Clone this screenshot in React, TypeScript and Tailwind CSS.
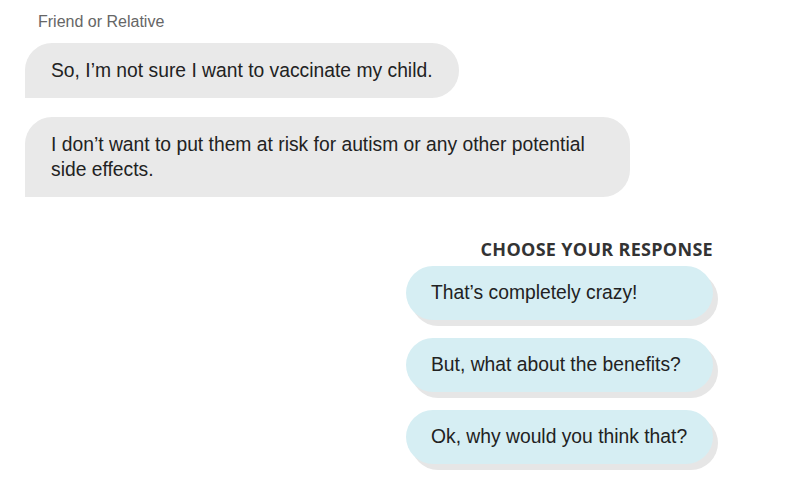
import React from 'react';

const responses = [
  "That’s completely crazy!",
  'But, what about the benefits?',
  'Ok, why would you think that?',
];

export default function App() {
  return (
    <div className="w-[810px] h-[489px] bg-white font-['Liberation_Sans',Arial,sans-serif] pt-[13px] overflow-hidden">
      {/* Incoming messages */}
      <div className="pl-[38px] text-[16px] leading-[18px] text-[#666]">Friend or Relative</div>
      <div className="flex flex-col items-start gap-[19px] pl-[25px] mt-[12px]">
        <div className="bg-[#e9e9e9] text-[#222] text-[19.3px] leading-[25px] px-[26px] py-[15px] rounded-[27px] rounded-bl-none">
          So, I’m not sure I want to vaccinate my child.
        </div>
        <div className="w-[605px] bg-[#e9e9e9] text-[#222] text-[19.3px] leading-[25px] px-[26px] py-[15px] rounded-[27px] rounded-bl-none">
          I don’t want to put them at risk for autism or any other potential side effects.
        </div>
      </div>

      {/* Response choices */}
      <div className="flex flex-col items-end pr-[97px] mt-[40px]">
        <h3 className="font-['Open_Sans',sans-serif] font-bold text-[18px] leading-[24px] tracking-[0.3px] text-[#333]">
          CHOOSE YOUR RESPONSE
        </h3>
        <div className="flex flex-col gap-[18px] mt-[5px]">
          {responses.map((r) => (
            <button
              key={r}
              className="w-[307px] h-[54px] flex items-center px-[25px] rounded-full bg-[#d6eef3] text-[#222] text-[19.3px] text-left shadow-[5px_6px_0_#e6e6e6]"
            >
              {r}
            </button>
          ))}
        </div>
      </div>
    </div>
  );
}
